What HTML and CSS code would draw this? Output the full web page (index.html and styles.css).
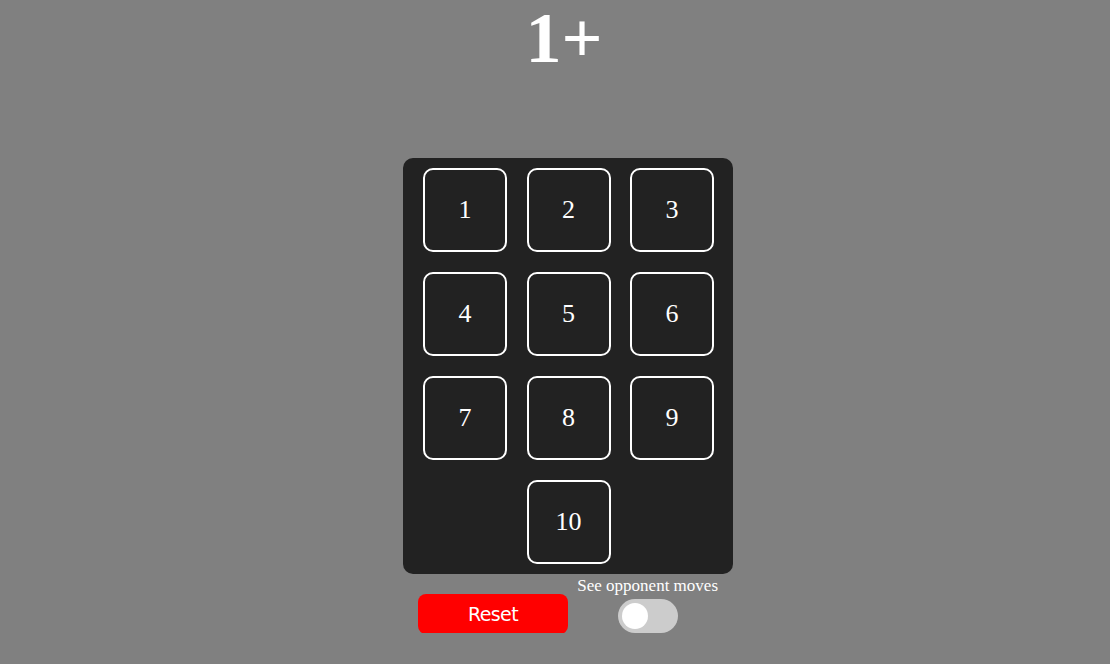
FILE: index.html
```html
<!DOCTYPE html>
<html>
<head>
<meta charset="utf-8">
<link rel="stylesheet" href="styles.css">
</head>
<body>
<h1 class="title">1+</h1>
<div class="game">
  <div class="board">
    <button class="cell">1</button>
    <button class="cell">2</button>
    <button class="cell">3</button>
    <button class="cell">4</button>
    <button class="cell">5</button>
    <button class="cell">6</button>
    <button class="cell">7</button>
    <button class="cell">8</button>
    <button class="cell">9</button>
    <button class="cell cell-mid">10</button>
  </div>
  <div class="controls">
    <button class="reset">Reset</button>
    <div class="toggle-group">
      <div class="toggle-label">See opponent moves</div>
      <div class="switch"><span class="knob"></span></div>
    </div>
  </div>
</div>
</body>
</html>
```
FILE: styles.css
```css
html, body {
  margin: 0;
  padding: 0;
  background: #808080;
  font-family: "Liberation Serif", "Times New Roman", serif;
  color: #fff;
}
.title {
  margin: 0;
  padding: 2px 0 0 18px;
  line-height: 72px;
  font-size: 72px;
  font-weight: bold;
  text-align: center;
  height: 158px;
  box-sizing: border-box;
}
.game {
  width: 330px;
  margin-left: calc(50% - 152px);
}
.board {
  background: #222;
  border-radius: 10px;
  padding: 10px 19px 10px 20px;
  display: grid;
  grid-template-columns: 84px 84px 84px;
  grid-auto-rows: 84px;
  column-gap: 19.5px;
  row-gap: 20px;
  height: 416px;
  box-sizing: border-box;
}
.cell {
  background: #222;
  border: 2px solid #fff;
  border-radius: 10px;
  color: #fff;
  font-family: "Liberation Serif", "Times New Roman", serif;
  font-size: 26px;
  padding: 0;
  width: 84px;
  height: 84px;
}
.cell-mid {
  grid-column: 2;
}
.controls {
  display: flex;
  justify-content: space-between;
  align-items: flex-end;
  padding: 2px 15px 0;
}
.reset {
  width: 150px;
  height: 40px;
  margin-bottom: -1px;
  background: #f00;
  border: none;
  border-radius: 8px;
  color: #fff;
  font-family: "DejaVu Sans", Tahoma, sans-serif;
  font-size: 19px;
  letter-spacing: -0.6px;
  padding: 0;
}
.toggle-group {
  display: flex;
  flex-direction: column;
  align-items: center;
}
.toggle-label {
  font-size: 17px;
  line-height: 19px;
}
.switch {
  margin-top: 4px;
  width: 60px;
  height: 34px;
  border-radius: 17px;
  background: #ccc;
  display: flex;
  align-items: center;
  padding: 0 4px;
  box-sizing: border-box;
}
.knob {
  width: 26px;
  height: 26px;
  border-radius: 50%;
  background: #fff;
}
```
